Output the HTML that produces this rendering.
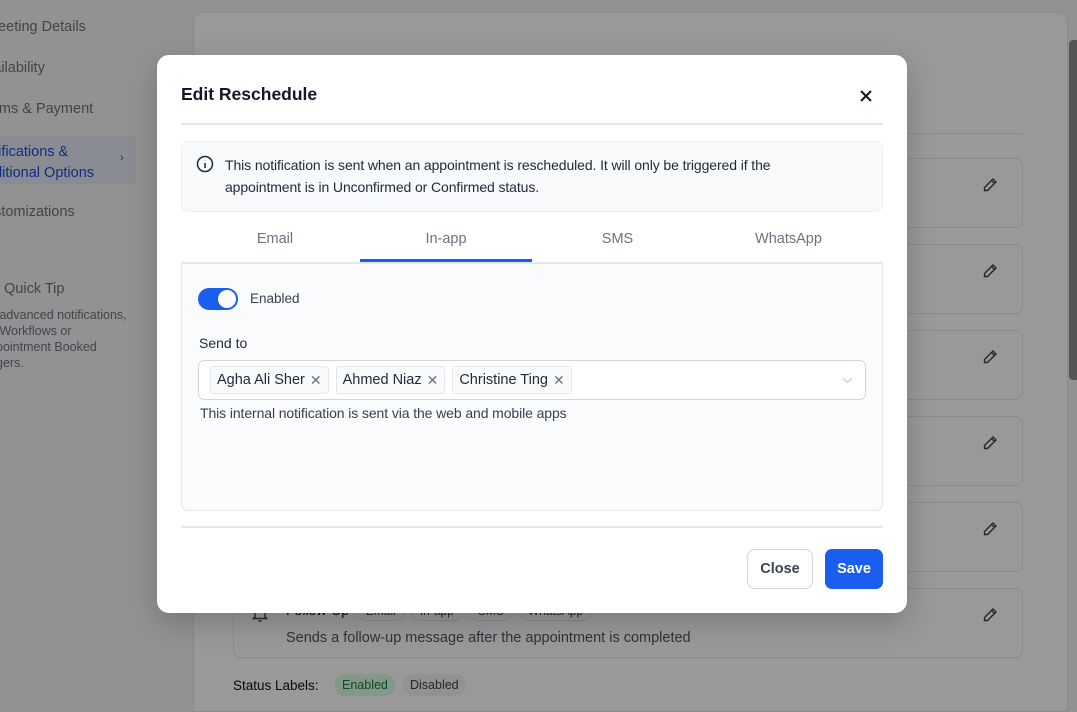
<!DOCTYPE html>
<html style="overflow:hidden"><head><style>
*{box-sizing:border-box;margin:0;padding:0}
html,body{width:1077px;height:712px;overflow:hidden}
body{font-family:"Liberation Sans",sans-serif;background:#f3f4f6;position:relative}
.abs{position:absolute}
.side{color:#6b7280;font-size:14.5px}
.card{position:absolute;left:233px;width:790px;height:70px;border:1px solid #e5e7eb;border-radius:8px;background:#fff}
.pen{position:absolute;right:24px;top:18px}
.overlay{position:absolute;left:0;top:0;width:1077px;height:712px;background:rgba(0,0,0,0.4)}
.modal{position:absolute;left:157px;top:55px;width:750px;height:558px;background:#fff;border-radius:12px;box-shadow:0 10px 30px rgba(0,0,0,.2)}
.tag{display:inline-flex;align-items:center;height:28px;padding:0 6px;border:1px solid #e5e7eb;border-radius:3px;background:#f9fafb;font-size:14.5px;color:#1f2937;margin-right:7px}
.tag span{margin-left:5px;color:#6b7280;font-size:14px}
.chip{display:inline-block;padding:2px 8px;border:1px solid #e5e7eb;border-radius:10px;font-size:12px;color:#374151;margin-right:6px}
</style></head><body>
<div class="side abs" style="left:-14px;top:19px">Meeting Details</div>
<div class="side abs" style="left:-14px;top:60px">vailability</div>
<div class="side abs" style="left:-14px;top:101px">erms &amp; Payment</div>
<div class="abs" style="left:0;top:136px;width:136px;height:48px;background:#e5eaf3;border-radius:4px"></div>
<div class="abs" style="left:-14px;top:142px;color:#1d4ed8;font-size:14.5px;line-height:21px">otifications &amp;<br>dditional Options</div>
<div class="abs" style="left:120px;top:152px;color:#1d4ed8;font-size:11px">›</div>
<div class="side abs" style="left:-14px;top:204px">ustomizations</div>
<div class="abs" style="left:4px;top:281px;font-size:14.5px;color:#6b7280">Quick Tip</div>
<div class="abs" style="left:-4px;top:307px;font-size:12.5px;color:#6b7280;line-height:16px">&nbsp;advanced notifications,<br>&nbsp;Workflows or<br>pointment Booked<br>gers.</div>
<div class="abs" style="left:193px;top:12px;width:875px;height:700px;background:#fff;border:1px solid #e5e7eb;border-radius:10px 10px 0 0"></div>
<div class="abs" style="left:233px;top:133px;width:790px;height:1px;background:#e5e7eb"></div>
<div class="card" style="top:158px"><svg class="pen" width="16" height="16" viewBox="0 0 16 16" fill="none" stroke="#374151" stroke-width="1.4"><path d="M11 2l3 3-8.5 8.5H2.5v-3z M9.5 3.5l3 3"/></svg></div>
<div class="card" style="top:244px"><svg class="pen" width="16" height="16" viewBox="0 0 16 16" fill="none" stroke="#374151" stroke-width="1.4"><path d="M11 2l3 3-8.5 8.5H2.5v-3z M9.5 3.5l3 3"/></svg></div>
<div class="card" style="top:330px"><svg class="pen" width="16" height="16" viewBox="0 0 16 16" fill="none" stroke="#374151" stroke-width="1.4"><path d="M11 2l3 3-8.5 8.5H2.5v-3z M9.5 3.5l3 3"/></svg></div>
<div class="card" style="top:416px"><svg class="pen" width="16" height="16" viewBox="0 0 16 16" fill="none" stroke="#374151" stroke-width="1.4"><path d="M11 2l3 3-8.5 8.5H2.5v-3z M9.5 3.5l3 3"/></svg></div>
<div class="card" style="top:502px"><svg class="pen" width="16" height="16" viewBox="0 0 16 16" fill="none" stroke="#374151" stroke-width="1.4"><path d="M11 2l3 3-8.5 8.5H2.5v-3z M9.5 3.5l3 3"/></svg></div>
<div class="card" style="top:588px"><svg class="pen" width="16" height="16" viewBox="0 0 16 16" fill="none" stroke="#374151" stroke-width="1.4"><path d="M11 2l3 3-8.5 8.5H2.5v-3z M9.5 3.5l3 3"/></svg>
<svg class="abs" style="left:18px;top:14px" width="16" height="20" viewBox="0 0 16 20" fill="none" stroke="#374151" stroke-width="1.4"><path d="M3 14V8a5 5 0 0110 0v6l1.5 1.5h-13z M6.5 18h3"/></svg>
<div class="abs" style="left:52px;top:12px;font-size:14px;color:#111;white-space:nowrap">Follow-Up &nbsp;<span class="chip">Email</span><span class="chip">In-app</span><span class="chip">SMS</span><span class="chip">WhatsApp</span></div>
<div class="abs" style="left:52px;top:41px;font-size:14.5px;color:#4b5563">Sends a follow-up message after the appointment is completed</div></div>
<div class="abs" style="left:233px;top:678px;font-size:13.5px;color:#111">Status Labels:</div>
<div class="abs" style="left:335px;top:674px;padding:4px 7px;border-radius:10px;background:#dcfce7;color:#15803d;font-size:12.5px">Enabled</div>
<div class="abs" style="left:403px;top:674px;padding:4px 7px;border-radius:10px;background:#f3f4f6;color:#374151;font-size:12.5px">Disabled</div>
<div class="overlay"></div>
<div class="abs" style="left:1069px;top:40px;width:8px;height:340px;background:#555;border-radius:4px 0 0 4px"></div>
<div class="modal">
<div class="abs" style="left:24px;top:29px;font-size:17.5px;color:#111827;font-weight:600">Edit Reschedule</div>
<svg class="abs" style="left:702px;top:34px" width="14" height="14" viewBox="0 0 14 14" stroke="#111827" stroke-width="2"><path d="M2 2l10 10M12 2L2 12"/></svg>
<div class="abs" style="left:24px;top:68px;width:702px;height:2px;background:#e5e7eb"></div>
<div class="abs" style="left:24px;top:86px;width:702px;height:71px;background:#f8f9fb;border:1px solid #eceef2;border-radius:8px"></div>
<svg class="abs" style="left:39px;top:100px" width="18" height="18" viewBox="0 0 18 18" fill="none" stroke="#1f2937" stroke-width="1.5"><circle cx="9" cy="9" r="7.5"/><path d="M9 8v5M9 5.2v.3"/></svg>
<div class="abs" style="left:68px;top:99px;font-size:14px;color:#1f2937;line-height:22px;letter-spacing:-0.1px">This notification is sent when an appointment is rescheduled. It will only be triggered if the<br>appointment is in Unconfirmed or Confirmed status.</div>
<div class="abs" style="left:24px;top:176px;width:188px;text-align:center;font-size:14.5px;color:#6b7280">Email</div>
<div class="abs" style="left:203px;top:176px;width:172px;text-align:center;font-size:14.5px;color:#6b7280">In-app</div>
<div class="abs" style="left:375px;top:176px;width:171px;text-align:center;font-size:14.5px;color:#6b7280">SMS</div>
<div class="abs" style="left:546px;top:176px;width:171px;text-align:center;font-size:14.5px;color:#6b7280">WhatsApp</div>
<div class="abs" style="left:24px;top:207px;width:702px;height:2px;background:#e5e7eb"></div>
<div class="abs" style="left:203px;top:204px;width:172px;height:3px;background:#1a5ef0"></div>
<div class="abs" style="left:24px;top:209px;width:702px;height:247px;background:#fafbfc;border:1px solid #e5e7eb;border-top:none;border-radius:0 0 6px 6px"></div>
<div class="abs" style="left:41px;top:233px;width:40px;height:22px;background:#1a5ef0;border-radius:11px"><div class="abs" style="left:20px;top:2px;width:18px;height:18px;background:#fff;border-radius:50%"></div></div>
<div class="abs" style="left:93px;top:236px;font-size:13.5px;color:#374151">Enabled</div>
<div class="abs" style="left:42px;top:280px;font-size:14px;color:#1f2937">Send to</div>
<div class="abs" style="left:41px;top:305px;width:668px;height:40px;background:#fff;border:1px solid #d1d5db;border-radius:6px;padding:5px 0 0 11px;display:flex">
<div class="tag">Agha Ali Sher<span>✕</span></div><div class="tag">Ahmed Niaz<span>✕</span></div><div class="tag">Christine Ting<span>✕</span></div>
<svg class="abs" style="right:12px;top:16px" width="11" height="7" viewBox="0 0 11 7" fill="none" stroke="#c0c4cc"><path d="M1 1l4.5 4.5L10 1"/></svg></div>
<div class="abs" style="left:43px;top:350px;font-size:14px;color:#374151;letter-spacing:-0.1px">This internal notification is sent via the web and mobile apps</div>
<div class="abs" style="left:24px;top:471px;width:702px;height:2px;background:#e5e7eb"></div>
<div class="abs" style="left:590px;top:494px;width:66px;height:40px;border:1px solid #d1d5db;border-radius:8px;font-size:14.5px;color:#374151;text-align:center;line-height:38px;font-weight:600">Close</div>
<div class="abs" style="left:668px;top:494px;width:58px;height:40px;background:#1a5ef0;border-radius:7px;font-size:14.5px;color:#fff;font-weight:bold;text-align:center;line-height:40px">Save</div>
</div>
</body></html>
